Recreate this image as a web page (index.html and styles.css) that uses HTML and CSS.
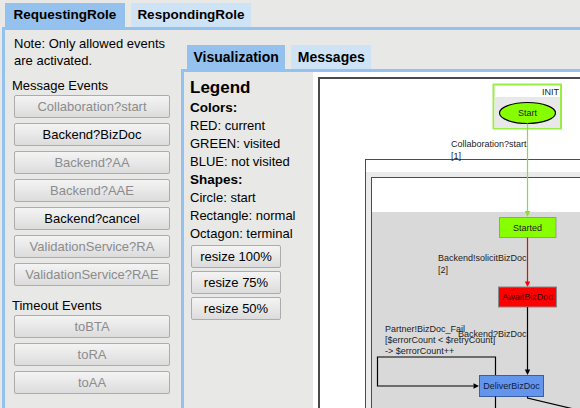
FILE: index.html
```html
<!DOCTYPE html>
<html>
<head>
<meta charset="utf-8">
<link rel="stylesheet" href="styles.css">
</head>
<body>
<div class="tabs outer-tabs">
  <div class="tab active">RequestingRole</div>
  <div class="tab">RespondingRole</div>
</div>
<div class="outer-panel">
  <div class="left-col">
    <div class="note">Note: Only allowed events are activated.</div>
    <div class="section-label">Message Events</div>
    <button class="evt" disabled>Collaboration?start</button>
    <button class="evt">Backend?BizDoc</button>
    <button class="evt" disabled>Backend?AA</button>
    <button class="evt" disabled>Backend?AAE</button>
    <button class="evt">Backend?cancel</button>
    <button class="evt" disabled>ValidationService?RA</button>
    <button class="evt" disabled>ValidationService?RAE</button>
    <div class="section-label timeout">Timeout Events</div>
    <button class="evt" disabled>toBTA</button>
    <button class="evt" disabled>toRA</button>
    <button class="evt" disabled>toAA</button>
  </div>
  <div class="right-col">
    <div class="tabs inner-tabs">
      <div class="tab active">Visualization</div>
      <div class="tab">Messages</div>
    </div>
    <div class="inner-panel">
      <div class="legend">
        <div class="legend-title">Legend</div>
        <div class="legend-sub">Colors:</div>
        <div class="legend-item">RED: current</div>
        <div class="legend-item">GREEN: visited</div>
        <div class="legend-item">BLUE: not visited</div>
        <div class="legend-sub">Shapes:</div>
        <div class="legend-item">Circle: start</div>
        <div class="legend-item">Rectangle: normal</div>
        <div class="legend-item">Octagon: terminal</div>
        <button class="resize">resize 100%</button>
        <button class="resize">resize 75%</button>
        <button class="resize">resize 50%</button>
      </div>
      <div class="graph-area">
        <div class="graph-box">
          <svg class="graph" width="320" height="400" viewBox="320 79 320 400">
            <!-- INIT cluster -->
            <rect x="493.5" y="84.5" width="67.5" height="44" fill="#ffffff" stroke="#99ee44" stroke-width="2"/>
            <rect x="494.5" y="97" width="65.5" height="31" fill="#e8e8e8"/>
            <text x="559" y="95" text-anchor="end">INIT</text>
            <ellipse cx="527.5" cy="113" rx="28" ry="10.5" fill="#88ff00" stroke="#000" stroke-width="1.2"/>
            <text x="527.5" y="116.3" text-anchor="middle">Start</text>

            <!-- red clusters -->
            <rect x="365.5" y="159.5" width="320" height="320" fill="#ebebeb" stroke="#ff0000"/>
            <rect x="366" y="160" width="320" height="12" fill="#ffffff"/>
            <rect x="371.5" y="177.5" width="320" height="320" fill="#d9d9d9" stroke="#ff0000"/>
            <rect x="372" y="178" width="320" height="34" fill="#ffffff"/>

            <text x="451" y="146.5">Collaboration?start</text>
            <text x="451" y="158.6">[1]</text>

            <!-- green edge -->
            <line x1="527.5" y1="123.5" x2="527.5" y2="212" stroke="#88e030" stroke-width="1.2"/>
            <polygon points="524.8,211 530.2,211 527.5,217" fill="#88e030"/>

            <rect x="499.5" y="217.5" width="56.5" height="20" fill="#88ff00" stroke="#999"/>
            <text x="527.5" y="230.6" text-anchor="middle">Started</text>

            <!-- red edge -->
            <line x1="527.5" y1="237.5" x2="527.5" y2="282" stroke="#ff0000" stroke-width="1.2"/>
            <polygon points="524.8,281.5 530.2,281.5 527.5,287" fill="#ff0000"/>
            <text x="438" y="260.5">Backend!solicitBizDoc</text>
            <text x="438" y="272.5">[2]</text>

            <rect x="498.5" y="287" width="58" height="20" fill="#ff0000" stroke="#888"/>
            <text x="527.5" y="300.4" text-anchor="middle" fill="#300">AwaitBizDoc</text>

            <!-- black edge -->
            <line x1="527.5" y1="307" x2="527.5" y2="370" stroke="#000" stroke-width="1.2"/>
            <polygon points="524.8,369.5 530.2,369.5 527.5,375" fill="#000"/>

            <text x="385" y="331.5">Partner!BizDoc_Fail</text>
            <text x="385" y="343.2">[$errorCount &lt; $retryCount]</text>
            <text x="385" y="354">-&gt; $errorCount++</text>
            <text x="458" y="336.5">Backend?BizDoc</text>

            <polyline points="495.5,375 495.5,357 377.5,357 377.5,386 473.5,386" fill="none" stroke="#000" stroke-width="1.2"/>
            <polygon points="473.5,383.3 473.5,388.7 479,386" fill="#000"/>

            <rect x="479.5" y="375.5" width="64" height="21" fill="#6495ed" stroke="#3a5fa8"/>
            <text x="511.5" y="389.3" text-anchor="middle" fill="#102040">DeliverBizDoc</text>

            <line x1="495.5" y1="396.5" x2="495.5" y2="430" stroke="#000" stroke-width="1.2"/>
            <polyline points="527.5,396.5 527.5,398 620,420" fill="none" stroke="#000" stroke-width="1.2"/>
          </svg>
        </div>
      </div>
    </div>
  </div>
</div>
</body>
</html>
```

FILE: styles.css
```css
html, body {
  margin: 0;
  padding: 0;
}

body {
  width: 580px;
  height: 408px;
  overflow: hidden;
  background: #e8e8e6;
  font-family: "Liberation Sans", Arial, sans-serif;
  color: #000;
}

.tabs {
  display: flex;
  gap: 6px;
  height: 24px;
}

.tab {
  height: 24px;
  line-height: 24px;
  font-weight: bold;
  background: #cfe3f6;
  color: #000;
  white-space: nowrap;
}

.tab.active {
  background: #94c1ee;
}

.outer-tabs {
  padding: 3px 0 0 5px;
}

.outer-tabs .tab {
  width: 120px;
  text-align: center;
  font-size: 13.5px;
}

.outer-panel {
  margin-left: 2px;
  border-top: 3px solid #94c1ee;
  border-left: 3px solid #94c1ee;
  display: flex;
  height: 378px;
}

.left-col {
  flex: none;
  width: 167px;
  padding: 4.5px 0 0 9px;
}

.note {
  width: 160px;
  font-size: 13px;
  line-height: 17px;
}

.section-label {
  font-size: 13px;
  line-height: 17px;
  margin: 8px 0 1.5px -2px;
}

.section-label.timeout {
  margin-top: 10.5px;
}

button {
  font-family: "Liberation Sans", Arial, sans-serif;
  font-size: 13px;
  color: #000;
  padding: 0;
  border: 1px solid #acacac;
  border-radius: 2px;
  background: linear-gradient(#f4f4f4, #dcdcdc);
  text-align: center;
  box-sizing: border-box;
}

button:disabled {
  color: #8c8c8c;
}

.evt {
  display: block;
  width: 156px;
  height: 23px;
  margin-bottom: 5px;
}

.right-col {
  flex: 1;
  min-width: 0;
  margin-top: 15px;
  display: flex;
  flex-direction: column;
}

.inner-tabs {
  padding-left: 6px;
}

.inner-tabs .tab {
  font-size: 14px;
  padding: 0 6.5px;
}

.inner-panel {
  flex: 1;
  min-height: 0;
  display: flex;
  border-top: 3px solid #94c1ee;
  border-left: 3px solid #94c1ee;
}

.legend {
  flex: none;
  width: 129px;
  box-sizing: border-box;
  padding: 5px 0 0 6px;
}

.legend-title {
  font-size: 17px;
  font-weight: bold;
  line-height: 22px;
}

.legend-sub {
  font-size: 13.5px;
  font-weight: bold;
  line-height: 18px;
}

.legend-item {
  font-size: 13px;
  line-height: 18px;
}

.resize {
  display: block;
  width: 90px;
  height: 23px;
  margin: 2px 0 3px 1px;
}

.graph-area {
  flex: 1;
  min-width: 0;
  background: #fff;
  padding: 5px;
  overflow: hidden;
}

.graph-box {
  width: 320px;
  height: 400px;
  border: 2px solid #4a4a4a;
}

.graph {
  display: block;
  font-family: "Liberation Sans", Arial, sans-serif;
  font-size: 9px;
  fill: #222;
}
```
